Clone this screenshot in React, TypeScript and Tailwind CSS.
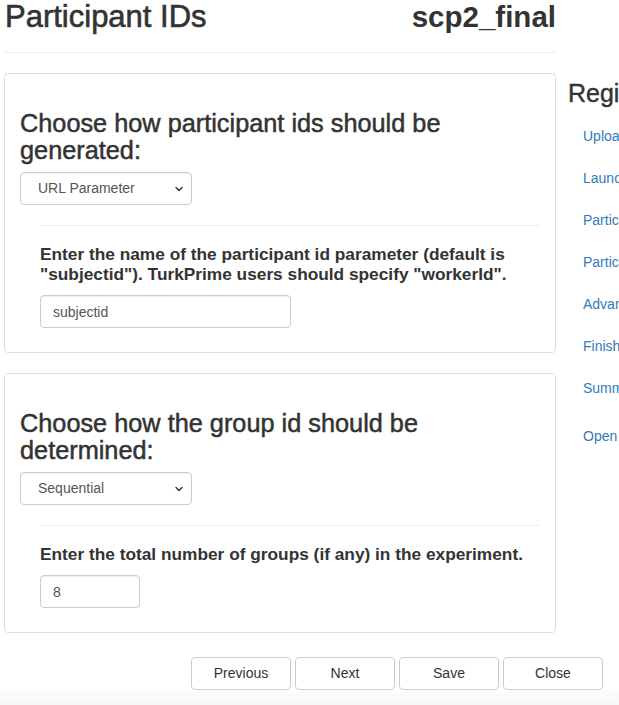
import { useState } from 'react';

const sideLinks = ['Upload', 'Launch', 'Participant IDs', 'Participant Groups', 'Advanced', 'Finish', 'Summary'];

function Chevron() {
  return (
    <svg width="10" height="10" viewBox="0 0 10 10" className="pointer-events-none absolute right-[8px] top-[12px]">
      <path d="M2 3.5 L5 6.5 L8 3.5" fill="none" stroke="#333" strokeWidth="1.4" strokeLinecap="round" strokeLinejoin="round" />
    </svg>
  );
}

function SelectBox({ value, options }: { value: string; options: string[] }) {
  const [current, setCurrent] = useState(value);
  return (
    <div className="relative mt-[8px] w-[172px]">
      <select
        value={current}
        onChange={(event) => setCurrent(event.target.value)}
        className="block h-[33px] w-full appearance-none rounded-[4px] border border-[#ccc] bg-white pl-[17px] pr-6 text-[14px] text-[#555] shadow-[inset_0_1px_1px_rgba(0,0,0,0.05)]"
      >
        {options.map((option) => (
          <option key={option}>{option}</option>
        ))}
      </select>
      <Chevron />
    </div>
  );
}

function Panel({
  title,
  select,
  label,
  input,
  inputWidth,
  className
}: {
  title: string;
  select: { value: string; options: string[] };
  label: string;
  input: string;
  inputWidth: string;
  className?: string;
}) {
  const [text, setText] = useState(input);
  return (
    <div className={`rounded-[4px] border border-[#ddd] px-[15px] pt-[36px] pb-[24px] ${className ?? ''}`}>
      <h3 className="text-[25.3px] leading-[27px] text-[#333] [-webkit-text-stroke:0.5px_#333]">{title}</h3>
      <SelectBox value={select.value} options={select.options} />
      <div className="ml-[20px]">
        <hr className="mt-[20px] border-t border-[#eee]" />
        <label className="mt-[18px] block text-[17.3px] font-bold leading-[20px] text-[#333]">{label}</label>
        <input
          value={text}
          onChange={(event) => setText(event.target.value)}
          className={`mt-[11px] block h-[33px] ${inputWidth} rounded-[4px] border border-[#ccc] px-[12px] text-[14px] text-[#555] shadow-[inset_0_1px_1px_rgba(0,0,0,0.075)] outline-none`}
        />
      </div>
    </div>
  );
}

export default function App() {
  return (
    <div className="relative h-[705px] w-[619px] overflow-hidden bg-white font-['Liberation_Sans',Arial,sans-serif] text-[#333]">
      <div className="flex">
        <main className="ml-[4px] w-[552px] shrink-0">
          <div className="flex items-start justify-between pl-[1px]">
            <h1 className="text-[31px] leading-[34px] [-webkit-text-stroke:0.6px_#333]">Participant IDs</h1>
            <span className="text-[29.5px] font-bold leading-[34px]">scp2_final</span>
          </div>
          <hr className="mt-[18px] border-t border-[#eee]" />

          <Panel
            className="mt-[20px]"
            title="Choose how participant ids should be generated:"
            select={{ value: 'URL Parameter', options: ['URL Parameter', 'Random', 'Sequential'] }}
            label={'Enter the name of the participant id parameter (default is "subjectid"). TurkPrime users should specify "workerId".'}
            input="subjectid"
            inputWidth="w-[251px]"
          />

          <Panel
            className="mt-[20px]"
            title="Choose how the group id should be determined:"
            select={{ value: 'Sequential', options: ['Sequential', 'Random', 'URL Parameter'] }}
            label="Enter the total number of groups (if any) in the experiment."
            input="8"
            inputWidth="w-[100px]"
          />
        </main>

        <aside className="ml-[12px] w-[240px] shrink-0 pt-[80px]">
          <h3 className="whitespace-nowrap text-[25px] leading-[27px] [-webkit-text-stroke:0.4px_#333]">Registration</h3>
          <ul className="mt-[8px] pl-[15px]">
            {sideLinks.map((link) => (
              <li key={link} className="whitespace-nowrap py-[11px] text-[14px] leading-[20px] text-[#337ab7]">
                {link}
              </li>
            ))}
            <li className="mt-[6px] whitespace-nowrap py-[11px] text-[14px] leading-[20px] text-[#337ab7]">Open experiment</li>
          </ul>
        </aside>
      </div>

      <div className="absolute left-0 top-[657px] flex w-[603px] justify-end gap-[4px]">
        {['Previous', 'Next', 'Save', 'Close'].map((label) => (
          <button
            key={label}
            type="button"
            className="h-[33px] w-[100px] rounded-[4px] border border-[#ccc] bg-white text-[14px] text-[#333]"
          >
            {label}
          </button>
        ))}
      </div>
      <div className="absolute bottom-0 left-0 h-[15px] w-full bg-gradient-to-b from-[#fcfcfc] to-[#f6f6f6]" />
    </div>
  );
}
